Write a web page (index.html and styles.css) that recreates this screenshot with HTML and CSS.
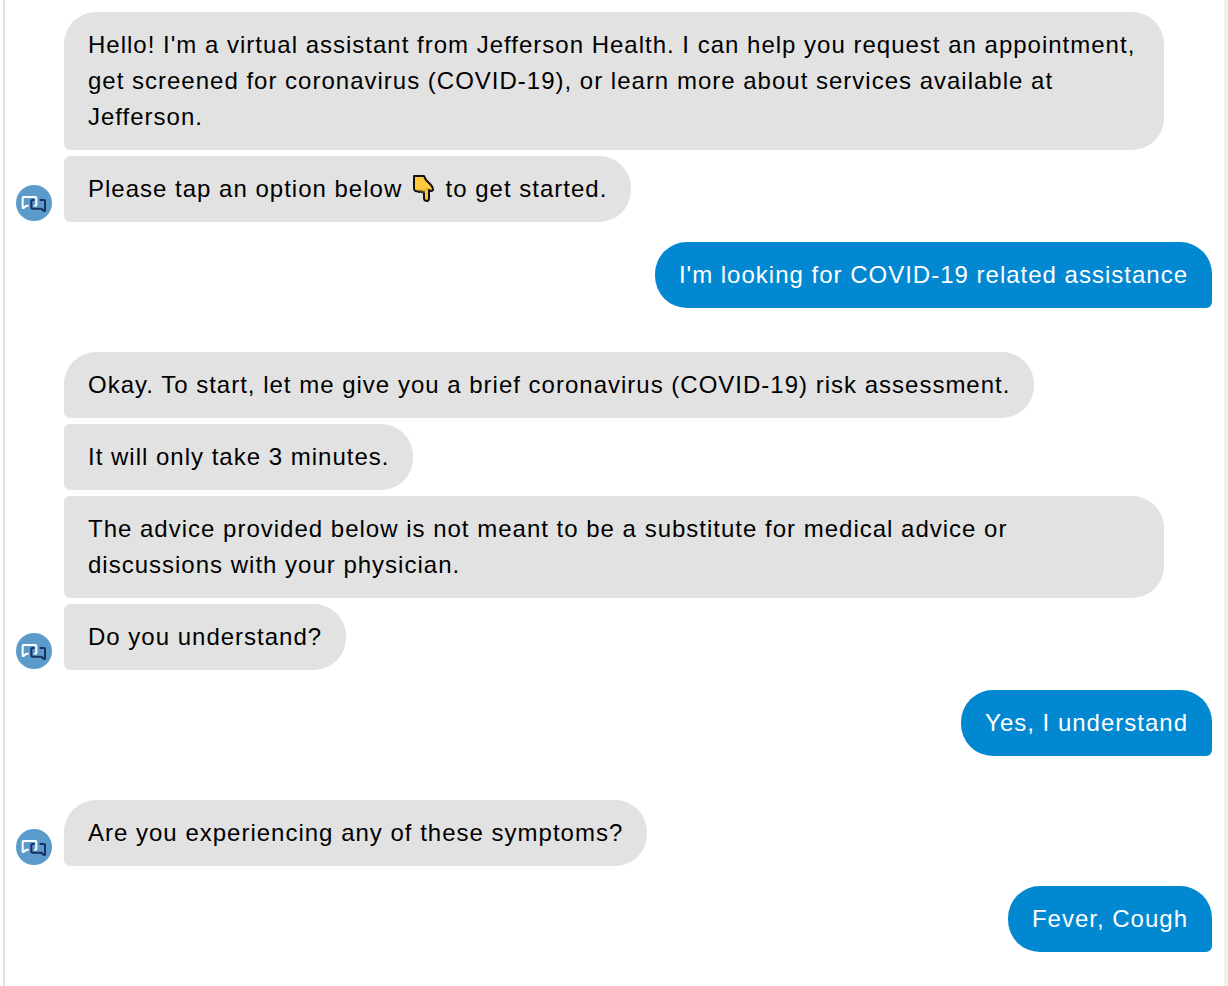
FILE: index.html
```html
<!DOCTYPE html>
<html lang="en">
<head>
<meta charset="utf-8">
<meta name="viewport" content="width=device-width, initial-scale=1">
<title>Jefferson Health virtual assistant</title>
<link rel="stylesheet" href="styles.css">
</head>
<body>
<svg class="sprite" aria-hidden="true">
  <symbol id="avatar" viewBox="0 0 108 108">
    <circle cx="54" cy="54" r="54" fill="#5a9bcb"/>
    <g fill="none" stroke-width="6" stroke-linejoin="round" stroke-linecap="round">
      <path d="M36 62H32L24 68Q20 71 20 67V39Q20 36 23 36H58Q61 36 61 39V59Q61 62 58 62H57" stroke="#fff"/>
      <path d="M53 45H49Q46 45 46 48V68Q46 71 49 71H75L83 77Q87 80 87 76V48Q87 45 84 45H73" stroke="#1c2f63"/>
    </g>
  </symbol>
</svg>
<main class="chat">
  <section class="turn">
    <svg class="avatar" role="img" aria-label="Assistant"><use href="#avatar"/></svg>
    <div class="stack">
      <p class="bubble">Hello! I'm a virtual assistant from Jefferson Health. I can help you request an appointment, get screened for coronavirus (COVID-19), or learn more about services available at Jefferson.</p>
      <p class="bubble">Please tap an option below <svg class="hand" viewBox="0 0 28 28" role="img" aria-label="pointing down"><path d="M4 1H14L16 5L21 10Q23 12 23 15Q21 17 19 15V23Q19 26 17 26Q14 26 14 23V17Q12 18 11 16Q9 18 8 16Q5 17 4 14Z" fill="#ffc83d" stroke="#111" stroke-width="2" stroke-linejoin="round"/><path d="M8 16V14M11 17V14M14 18V14M18 15L16 13" fill="none" stroke="#c8912b" stroke-width="1"/></svg> to get started.</p>
    </div>
  </section>
  <section class="reply"><p class="bubble user">I'm looking for COVID-19 related assistance</p></section>
  <section class="turn">
    <svg class="avatar" role="img" aria-label="Assistant"><use href="#avatar"/></svg>
    <div class="stack">
      <p class="bubble">Okay. To start, let me give you a brief coronavirus (COVID-19) risk assessment.</p>
      <p class="bubble">It will only take 3 minutes.</p>
      <p class="bubble">The advice provided below is not meant to be a substitute for medical advice or discussions with your physician.</p>
      <p class="bubble">Do you understand?</p>
    </div>
  </section>
  <section class="reply"><p class="bubble user">Yes, I understand</p></section>
  <section class="turn">
    <svg class="avatar" role="img" aria-label="Assistant"><use href="#avatar"/></svg>
    <div class="stack">
      <p class="bubble">Are you experiencing any of these symptoms?</p>
    </div>
  </section>
  <section class="reply"><p class="bubble user">Fever, Cough</p></section>
</main>
</body>
</html>
```

FILE: styles.css
```css
* { box-sizing: border-box; }
body {
  margin: 0;
  background: #fff;
  color: #000;
  font: 24px/36px "Liberation Sans", Arial, sans-serif;
  letter-spacing: 1px;
}
.sprite { position: absolute; width: 0; height: 0; }
.chat {
  min-height: 100vh;
  margin-left: 3px;
  padding: 12px 12px 0 11px;
  border-left: 2px solid #e3e3e3;
  border-right: 4px solid #f0f0f0;
}
.turn {
  display: flex;
  align-items: flex-end;
  gap: 12px;
  padding-right: 48px;
}
.avatar { flex: none; width: 36px; height: 36px; margin-bottom: 1px; }
.stack {
  flex: 1;
  min-width: 0;
  display: flex;
  flex-direction: column;
  align-items: flex-start;
  gap: 6px;
}
.bubble {
  margin: 0;
  padding: 15px 24px;
  border-radius: 6px 32px 32px 6px;
  background: #e2e2e2;
}
.bubble:first-child { border-top-left-radius: 32px; }
.reply {
  display: flex;
  justify-content: flex-end;
  margin: 20px 0 44px;
}
.bubble.user {
  border-radius: 32px 32px 6px 32px;
  background: #0288d1;
  color: #fff;
}
.reply:last-child { margin-bottom: 0; }
.hand { width: 28px; height: 28px; vertical-align: -6px; }
```
